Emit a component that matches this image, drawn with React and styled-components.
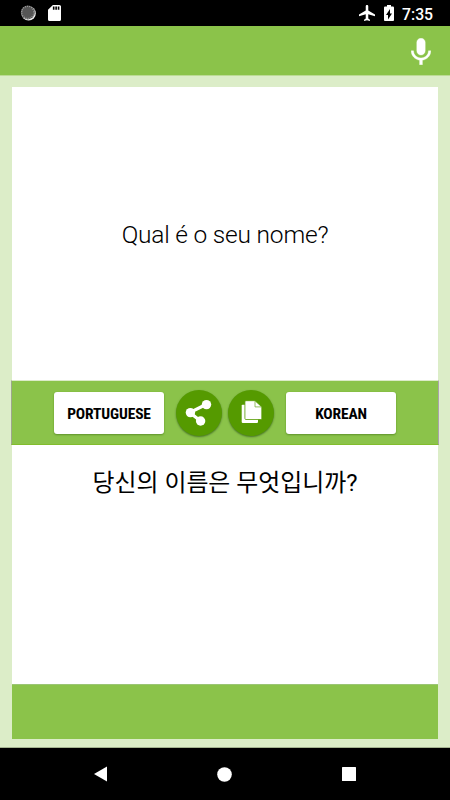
import React from "react";
import styled, { createGlobalStyle } from "styled-components";

const GlobalStyle = createGlobalStyle`
  * { box-sizing: border-box; }
  body { margin: 0; background: #000; }
`;

const Screen = styled.div`
  width: 450px;
  height: 800px;
  display: flex;
  flex-direction: column;
  overflow: hidden;
  background: #dcedc8;
  font-family: Roboto, "Noto Sans CJK KR", sans-serif;
`;

const Icon = styled.svg`
  display: block;
  flex: none;
  fill: #fff;
`;

const StatusBar = styled.header`
  flex: none;
  height: 26px;
  padding: 0 17px 0 20px;
  display: flex;
  align-items: center;
  justify-content: space-between;
  background: #000;
`;

const StatusGroup = styled.div`
  display: flex;
  align-items: center;
  gap: ${(p) => p.$gap}px;
`;

const Clock = styled.span`
  width: 31px;
  margin-left: -1px;
  color: #fff;
  font-size: 15.8px;
  font-weight: 500;
  line-height: 26px;
  white-space: nowrap;
  padding-top: 3px;
`;

const Toolbar = styled.div`
  flex: none;
  height: 49px;
  padding: 12px 19px 0 0;
  display: flex;
  justify-content: flex-end;
  background: #8bc34a;
  box-shadow: 0 1px 0 #bcdb95;
`;

const Content = styled.main`
  flex: none;
  height: 673px;
  padding: 12px 12px 9px;
  display: flex;
  flex-direction: column;
  border-bottom: 1px solid #a5b491;
`;

const Panel = styled.section`
  flex: none;
  height: ${(p) => p.$height}px;
  padding-top: ${(p) => p.$top}px;
  background: #fff;
  text-align: center;
`;

const Phrase = styled.p`
  margin: 0;
  color: #000;
  font-size: ${(p) => p.$size}px;
  font-weight: ${(p) => p.$weight};
  line-height: 36px;
  letter-spacing: ${(p) => p.$spacing || 0}px;
  white-space: nowrap;
`;

const ControlBar = styled.div`
  flex: none;
  height: 65px;
  margin: 0 -1px;
  padding-left: 42px;
  display: flex;
  align-items: center;
  background: #8bc34a;
  border: 1px solid;
  border-color: #dcebc8 #aaa3aa #82bd2c #9da78c;
`;

const LanguageButton = styled.button`
  width: 110px;
  height: 42px;
  margin: 0 0 0 ${(p) => p.$left || 0}px;
  padding: 2px 0 0;
  border: 0;
  border-radius: 3px;
  background: #fff;
  box-shadow: 0 1px 2px #5f932d, 0 0 1px #77b62b;
  color: #000;
  font-family: "Roboto Condensed", Roboto, sans-serif;
  font-stretch: 75%;
  font-size: 15.5px;
  letter-spacing: -0.15px;
  font-weight: 700;
`;

const RoundButton = styled.button`
  width: 46px;
  height: 46px;
  margin: 0 0 0 ${(p) => p.$left}px;
  padding: 0;
  border: 0;
  border-radius: 50%;
  background: #559a00;
  box-shadow: 0 1px 2px #47722a;
`;

const Footer = styled.div`
  flex: none;
  height: 55px;
  background: #8bc34a;
  border-top: 1px solid #9bc574;
`;

const NavBar = styled.nav`
  flex: 1;
  padding: 0 94px 0 94px;
  display: flex;
  align-items: center;
  justify-content: space-between;
  background: #000;
`;

export default function App() {
  return (
    <>
      <GlobalStyle />
      <Screen>
        <StatusBar>
          <StatusGroup $gap={12}>
            <Icon width="16" height="16" viewBox="0 0 16 16">
              <circle cx="8.6" cy="8.4" r="7.2" fill="#eee" />
              <circle cx="7.8" cy="7.4" r="7" fill="#555" />
              <circle cx="7.8" cy="7.4" r="6.1" fill="none" stroke="#a0a0a0" strokeWidth="1.3" strokeDasharray="1 1.1" />
            </Icon>
            <Icon width="13" height="16" viewBox="4 2 16 20" preserveAspectRatio="none">
              <path d="M18 2h-8L4 8v12c0 1.1.9 2 2 2h12c1.1 0 2-.9 2-2V4c0-1.1-.9-2-2-2zm-6 6h-2V4h2v4zm3 0h-2V4h2v4zm3 0h-2V4h2v4z" />
            </Icon>
          </StatusGroup>
          <StatusGroup $gap={9}>
            <Icon width="16" height="16" viewBox="2 2 19 20" preserveAspectRatio="none">
              <path d="M21 16v-2l-8-5V3.5c0-.83-.67-1.5-1.5-1.5S10 2.67 10 3.5V9l-8 5v2l8-2.5V19l-2 1.5V22l3.5-1 3.5 1v-1.5L13 19v-5.5l8 2.5z" />
            </Icon>
            <Icon width="10" height="16" viewBox="7 2 10 20" preserveAspectRatio="none">
              <path d="M15.67 4H14V2h-4v2H8.33C7.6 4 7 4.6 7 5.33v15.33C7 21.4 7.6 22 8.33 22h7.33c.74 0 1.34-.6 1.34-1.33V5.33C17 4.6 16.4 4 15.67 4zM11 20v-5.5H9L13 7v5.5h2L11 20z" />
            </Icon>
            <Clock>7:35</Clock>
          </StatusGroup>
        </StatusBar>
        <Toolbar>
          <Icon width="20" height="27" viewBox="4.9 1.9 14.2 19.2" preserveAspectRatio="none">
            <path stroke="#fff" strokeWidth=".25" d="M12 14c1.66 0 2.99-1.34 2.99-3L15 5c0-1.66-1.34-3-3-3S9 3.34 9 5v6c0 1.66 1.34 3 3 3zm5.3-3c0 3-2.54 5.1-5.3 5.1S6.7 14 6.7 11H5c0 3.41 2.72 6.23 6 6.72V21h2v-3.28c3.28-.48 6-3.3 6-6.72h-1.7z" />
          </Icon>
        </Toolbar>
        <Content>
          <Panel $height={293} $top={130}>
            <Phrase $size={24.5} $weight={300} $spacing={-0.2}>Qual é o seu nome?</Phrase>
          </Panel>
          <ControlBar>
            <LanguageButton>PORTUGUESE</LanguageButton>
            <RoundButton $left={12} aria-label="Share">
              <Icon width="46" height="46" viewBox="0 0 46 46">
                <path d="M30.5 14.2 13.8 22.5 24.5 31" fill="none" stroke="#fff" strokeWidth="3.2" />
                <circle cx="30.5" cy="14.6" r="4.7" />
                <circle cx="14.4" cy="22.6" r="4.7" />
                <circle cx="24.6" cy="31" r="4.7" />
              </Icon>
            </RoundButton>
            <RoundButton $left={6} aria-label="Copy">
              <Icon width="46" height="46" viewBox="0 0 46 46">
                <rect x="13.7" y="14.7" width="16.3" height="18.2" rx=".8" />
                <path d="M18 10.7h9l6.8 6.2V28.5q0 1-1 1H18q-1.1 0-1.1-1V11.7q0-1 1.1-1z" stroke="#559a00" strokeWidth=".8" />
                <path d="M27 11.2v5.7h6.2" fill="none" stroke="#79ad3c" strokeWidth=".8" />
              </Icon>
            </RoundButton>
            <LanguageButton $left={12}>KOREAN</LanguageButton>
          </ControlBar>
          <Panel $height={239} $top={20}>
            <Phrase $size={23.9} $weight={400}>당신의 이름은 무엇입니까?</Phrase>
          </Panel>
          <Footer />
        </Content>
        <NavBar>
          <Icon width="13" height="16" viewBox="0 0 13 16"><path d="M0 8 13 .5v15z" /></Icon>
          <Icon width="15" height="15" viewBox="0 0 15 15"><circle cx="7.5" cy="7.5" r="7.3" /></Icon>
          <Icon width="14" height="14" viewBox="0 0 14 14"><rect width="14" height="14" rx=".5" /></Icon>
        </NavBar>
      </Screen>
    </>
  );
}
